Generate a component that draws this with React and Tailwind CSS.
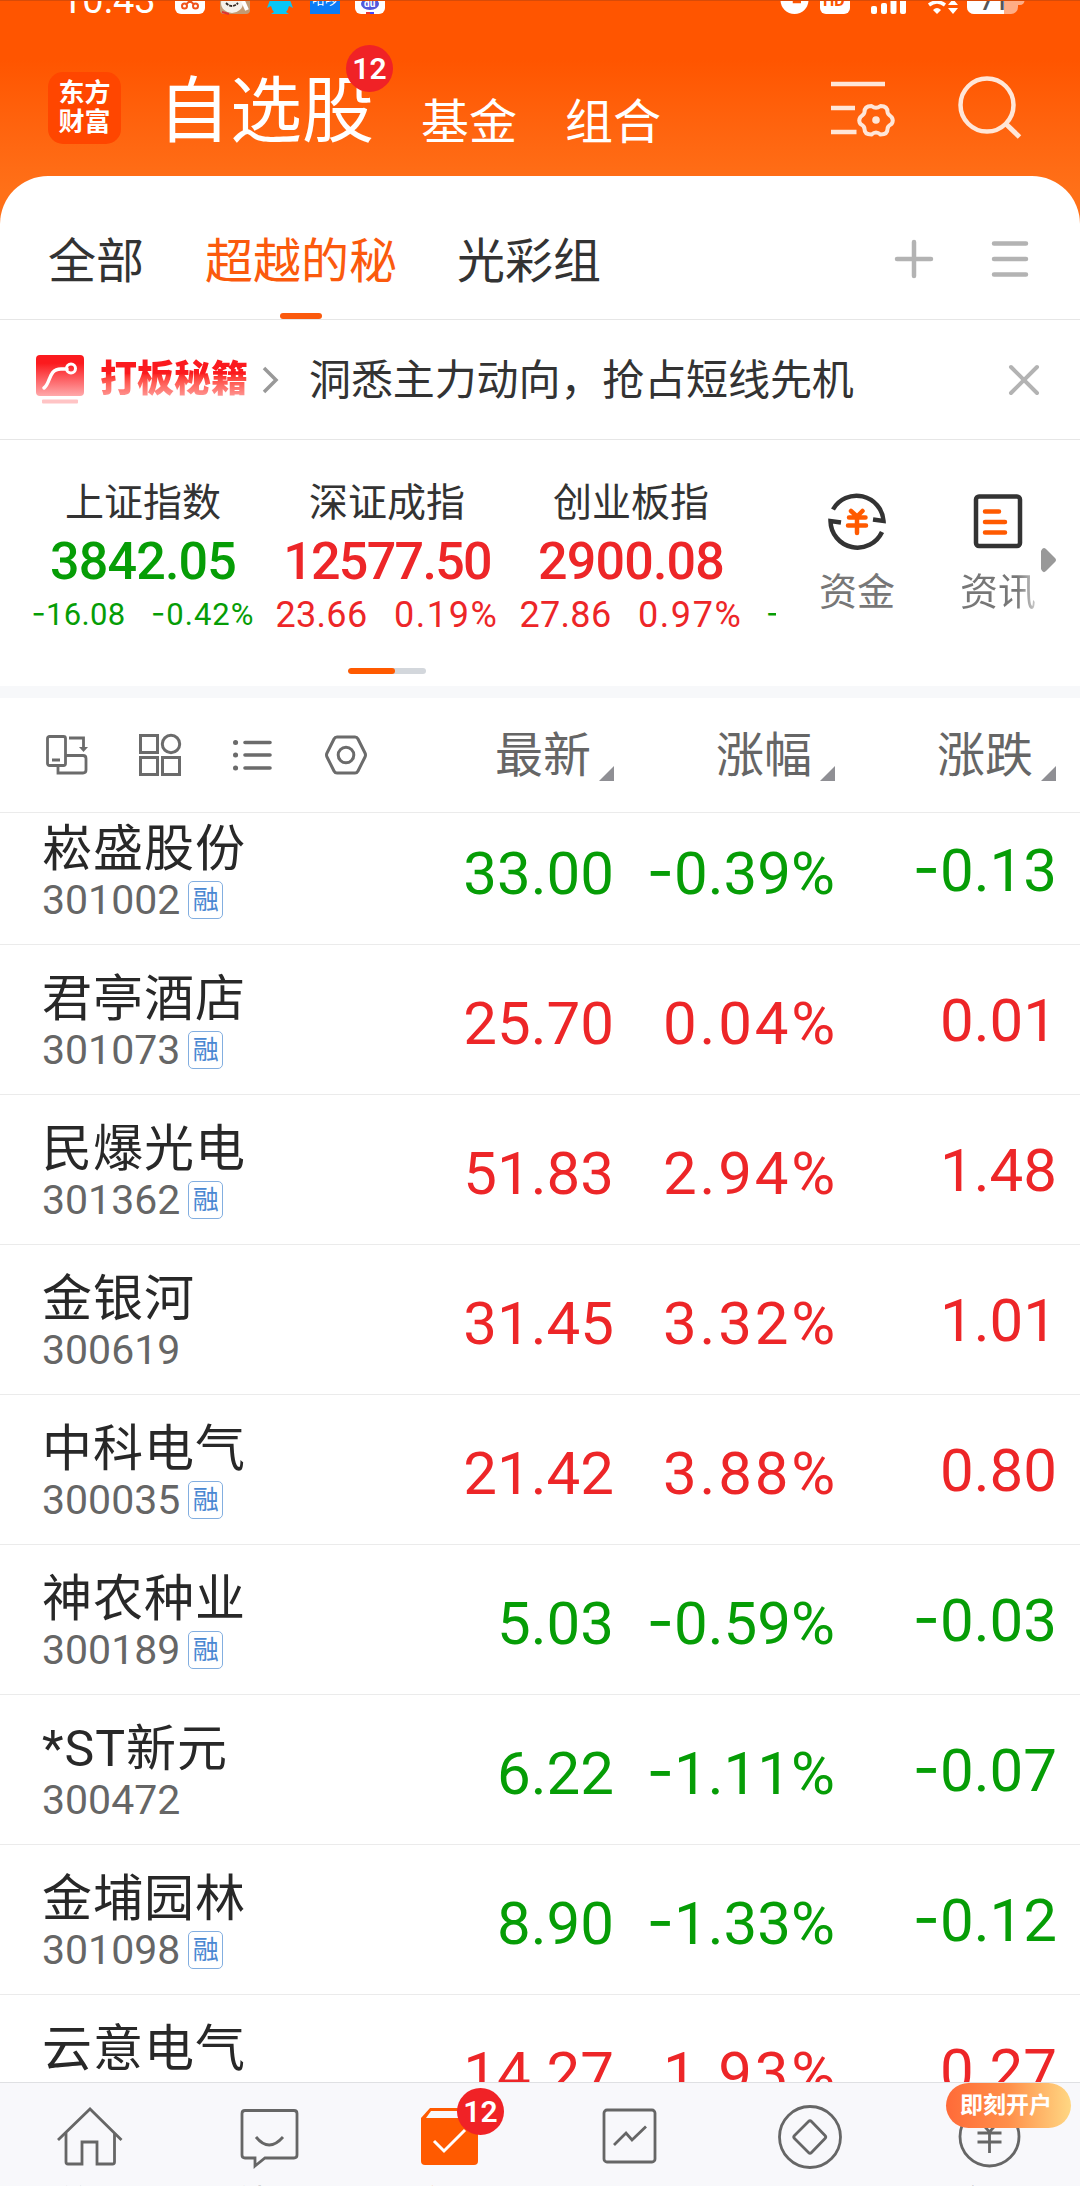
import React from "react";

const stocks = [
  { name: "崧盛股份", code: "301002", margin: true, price: "33.00", pct: "-0.39%", diff: "-0.13" },
  { name: "君亭酒店", code: "301073", margin: true, price: "25.70", pct: "0.04%", diff: "0.01" },
  { name: "民爆光电", code: "301362", margin: true, price: "51.83", pct: "2.94%", diff: "1.48" },
  { name: "金银河", code: "300619", margin: false, price: "31.45", pct: "3.32%", diff: "1.01" },
  { name: "中科电气", code: "300035", margin: true, price: "21.42", pct: "3.88%", diff: "0.80" },
  { name: "神农种业", code: "300189", margin: true, price: "5.03", pct: "-0.59%", diff: "-0.03" },
  { name: "*ST新元", code: "300472", margin: false, price: "6.22", pct: "-1.11%", diff: "-0.07" },
  { name: "金埔园林", code: "301098", margin: true, price: "8.90", pct: "-1.33%", diff: "-0.12" },
  { name: "云意电气", code: "", margin: false, price: "14.27", pct: "1.93%", diff: "0.27" },
];

const indexes = [
  { name: "上证指数", value: "3842.05", diff: "-16.08", pct: "-0.42%" },
  { name: "深证成指", value: "12577.50", diff: "23.66", pct: "0.19%" },
  { name: "创业板指", value: "2900.08", diff: "27.86", pct: "0.97%" },
];

// the minus sign is wider and sits higher than Roboto's hyphen
function Num({ children }) {
  if (!children.startsWith("-")) return children;
  return (
    <>
      <span className="font-['Inter'] leading-[0] align-[0.03em]">-</span>
      {children.slice(1)}
    </>
  );
}

function StatusBar() {
  return (
    <div className="flex h-[18px] border-t border-[#d84b08] overflow-hidden">
      <div className="ml-[61px] w-[114px] -mt-[19px] text-[38px] leading-[37px] text-white">10:43</div>
      <svg className="w-[212px] h-[14px]" viewBox="175 1 212 14">
        <rect x="175" y="-16" width="30" height="30" rx="6" fill="#fff" />
        <g stroke="#f0531c" strokeWidth="2" fill="none">
          <circle cx="184.500" cy="6" r="2.500" />
          <circle cx="195.500" cy="6" r="2.500" />
          <path d="M186.500 4 L195 -4 M193.500 4 L185 -4" />
        </g>
        <rect x="220" y="-16" width="30" height="30" rx="4" fill="#c39a72" />
        <ellipse cx="232" cy="3" rx="11" ry="10" fill="#f5f1ea" />
        <path d="M226 3 q6 6 12 0 M230 -1 h4" stroke="#332a24" strokeWidth="1.800" strokeDasharray="3 1" fill="none" />
        <path d="M243 1 l4 9" stroke="#fff" strokeWidth="4" />
        <path d="M222 12 l7 2" stroke="#d33" strokeWidth="2" />
        <path d="M270 0 h20 l3 8 -4 -2 q-1 4 -3 6 l3 2 h-18 l3 -2 q-2 -2 -3 -6 l-4 2z" fill="#08c6f7" />
        <rect x="310" y="-16" width="30" height="30" fill="#0a7cf5" />
        <text x="312" y="4" fontSize="13" fill="#fff">哈啰</text>
        <rect x="355" y="-16" width="30" height="30" rx="6" fill="#fff" />
        <ellipse cx="370" cy="4" rx="9" ry="6" fill="#5157dc" />
        <text x="364" y="7" fontSize="10" fontWeight="700" fill="#fff">du</text>
        <path d="M366 13 h4" stroke="#e33" strokeWidth="2" />
        <path d="M370 13 h4" stroke="#44f" strokeWidth="2" />
      </svg>
      <svg className="ml-[391px] w-[250px] h-[14px]" viewBox="777 1 250 14">
        <circle cx="793.500" cy="0" r="14" fill="#fff" />
        <path d="M793 -4 v6 h7" stroke="#ff5500" strokeWidth="2.500" fill="none" />
        <rect x="819" y="-16" width="30" height="30" rx="6" fill="#fff" />
        <text x="822" y="6" fontSize="16" fontWeight="700" fill="#ff5500">HD</text>
        <g fill="#fff">
          <rect x="870" y="6" width="6" height="8" rx="2" />
          <rect x="880" y="3" width="6" height="11" rx="2" />
          <rect x="889.500" y="-3" width="6" height="17" rx="2" />
          <rect x="899" y="-8" width="6" height="22" rx="2" />
          <path d="M932 10 q4 -4 8 0 l-4 4z" />
          <path d="M952 -1 l5 6 h-10z M947 8 h10 l-5 6z" />
        </g>
        <path d="M928 5 q8 -6 16 0" stroke="#fff" strokeWidth="3.500" fill="none" />
        <path d="M925 -1 q11 -7 22 0" stroke="#fff" strokeWidth="2" fill="none" />
        <rect x="966" y="-12" width="51" height="26" rx="7" fill="#ffad85" />
        <path d="M966 -5 h37 v19 h-30 a7 7 0 0 1 -7 -7z" fill="#fff" />
        <path d="M1016 -4 h3 a2 2 0 0 1 0 9 h-3z" fill="#ffad85" />
        <text x="979" y="10" fontSize="25" fontWeight="500" fill="#555">71</text>
      </svg>
    </div>
  );
}

function CountBadge({ className }) {
  return (
    <span className={`absolute flex items-center justify-center w-[47px] h-[47px] rounded-full bg-[#f02226] text-white text-[30px] leading-none font-semibold ${className}`}>
      12
    </span>
  );
}

function Header() {
  return (
    <header className="flex h-[158px]">
      <div className="ml-12 mt-[54px] flex flex-col items-center justify-center w-[73px] h-[72px] rounded-[15px] bg-[#ff4600] text-white text-[26px] leading-[29px] font-bold">
        <span>东方</span>
        <span>财富</span>
      </div>
      <div className="relative ml-[37px] mt-[58px] w-[221px] text-[72px] leading-[72px] text-white">
        自选股
        <CountBadge className="left-[188px] -top-[31px]" />
      </div>
      <div className="ml-[42px] mt-[81px] text-[48px] leading-[48px] text-white">基金</div>
      <div className="ml-[48px] mt-[81px] text-[48px] leading-[48px] text-white">组合</div>
      <svg className="ml-[168px] mt-[56px] w-[66px] h-[70px]" viewBox="829 74 66 70" fill="none" stroke="#ffe6d8" strokeWidth="4.500">
        <path d="M831 84 h54 M831 108 h24 M831 132 h25.500" />
        <path
          d="M871.500 106 q4.500 3.500 9 0 q7 0 7 6 q0 2 4 5 q2.500 3.500 0 7 q-4 2 -4 5 q0 5.500 -7 5.500 q-4.500 -4 -9 0 q-7 0 -7 -5.500 q0 -3 -4 -5 q-2.500 -3.500 0 -7 q4 -3 4 -5 q0 -6 7 -6z"
          strokeWidth="4"
          strokeLinejoin="round"
        />
        <circle cx="876" cy="120" r="3.800" fill="#ffe6d8" stroke="none" />
      </svg>
      <svg className="ml-[61px] mt-[56px] w-[70px] h-[70px]" viewBox="956 74 70 70" fill="none" stroke="#ffe6d8" strokeWidth="4.500">
        <circle cx="987" cy="105" r="26.500" />
        <path d="M1006 124 L1019.500 137" strokeWidth="5" />
      </svg>
    </header>
  );
}

function GroupTabs() {
  return (
    <div className="flex h-[144px] border-b border-[#e6e6e6] text-[48px] leading-[48px] text-[#333]">
      <div className="ml-12 mt-[62px]">全部</div>
      <div className="ml-[61px] mt-[62px] flex flex-col items-center text-[#fb5a0d]">
        超越的秘
        <span className="mt-[27px] w-[42px] h-[6px] rounded-full bg-[#fb5a0d]" />
      </div>
      <div className="ml-[60px] mt-[62px]">光彩组</div>
      <svg className="ml-[291px] mt-[61px] w-[44px] h-[44px]" viewBox="0 0 44 44" stroke="#b3b3b3" strokeWidth="4.500" strokeLinecap="round">
        <path d="M22 5 V39 M5 22 H39" />
      </svg>
      <svg className="ml-[52px] mt-[61px] w-[44px] h-[44px]" viewBox="0 0 44 44" stroke="#b3b3b3" strokeWidth="4.500" strokeLinecap="round">
        <path d="M6 6.500 H38 M6 22 H38 M6 37.500 H38" />
      </svg>
    </div>
  );
}

function PromoBanner() {
  return (
    <div className="flex items-center h-[120px] border-b border-[#e6e6e6]">
      <svg className="ml-9 w-12 h-[50px]" viewBox="0 0 48 50" fill="none">
        <defs>
          <linearGradient id="promo" x1="0" y1="0" x2="0" y2="1">
            <stop offset="0.200" stopColor="#fb1a1e" />
            <stop offset="1" stopColor="#ffa9ab" />
          </linearGradient>
        </defs>
        <rect width="48" height="41" rx="4" fill="url(#promo)" />
        <path d="M8 33 C15 28 12 14 25 14 H31" stroke="#fff" strokeWidth="3.500" strokeLinecap="round" />
        <circle cx="35" cy="13.500" r="4.500" stroke="#fff" strokeWidth="3" />
        <rect x="6" y="44.500" width="36" height="4" rx="1" fill="#ffc4c5" />
      </svg>
      <div className="ml-4 text-[37px] leading-[44px] font-black bg-gradient-to-b from-[#fb1a1e] from-35% to-[#ffa9ab] bg-clip-text text-transparent">打板秘籍</div>
      <svg className="ml-[13px] w-[20px] h-[32px]" viewBox="0 0 20 32" fill="none" stroke="#999" strokeWidth="3.500">
        <path d="M3 4 L15 16 L3 28" />
      </svg>
      <div className="ml-[28px] pt-[2px] text-[42px] leading-[42px] tracking-[-0.1px] text-[#333]">洞悉主力动向，抢占短线先机</div>
      <svg className="ml-auto mr-[40px] w-[32px] h-[32px]" viewBox="0 0 32 32" stroke="#b3b3b3" strokeWidth="4" strokeLinecap="round">
        <path d="M3 3 L29 29 M29 3 L3 29" />
      </svg>
    </div>
  );
}

function IndexCard({ item }) {
  const down = item.diff.startsWith("-");
  return (
    <div className={`w-[244px] flex flex-col items-center ${down ? "text-[#069d06]" : "text-[#ed2628]"}`}>
      <div className="mt-[44px] text-[39px] leading-[39px] text-[#333]">{item.name}</div>
      <div className={`mt-[13px] text-[52px] leading-[52px] font-medium ${item.value.length > 7 ? "tracking-[-1.7px]" : "tracking-[-0.8px]"}`}>{item.value}</div>
      <div className={`mt-[7px] flex w-[223px] h-[40px] items-baseline justify-between whitespace-nowrap leading-[40px] ${down ? "text-[31px]" : "text-[36px]"}`}>
        <span className="tracking-[0.3px]"><Num>{item.diff}</Num></span>
        <span className={down ? "tracking-[1px]" : "tracking-[1.6px]"}><Num>{item.pct}</Num></span>
      </div>
    </div>
  );
}

function IndexPanel() {
  return (
    <section className="h-[258px] border-b-[12px] border-[#f7f8fa]">
      <div className="flex h-[228px]">
        <div className="ml-[21px] flex w-[732px]">
          {indexes.map((item) => (
            <IndexCard key={item.name} item={item} />
          ))}
        </div>
        <div className="w-[23px] pl-[13px] pt-[153px] text-[31px] leading-[40px] text-[#069d06]">
          <div className="w-[10px] overflow-hidden font-['Inter']">-</div>
        </div>
        <div className="ml-[41px] flex w-[80px] flex-col items-center">
          <svg className="mt-[50px] w-[62px] h-[62px]" viewBox="825 490 62 62" fill="none" stroke="#333" strokeWidth="4.500">
            <path d="M832 509.500 A27 27 0 0 1 882.500 521 L872 519.500" />
            <path d="M881 532 A27 27 0 0 1 829.500 521 L840 522.500" />
            <path d="M850 511 L856 516.500 L861.500 511 M848 517.500 H864.500 M847 525.500 H865 M856 517 V533" stroke="#ff5a00" strokeLinecap="round" />
          </svg>
          <div className="mt-[21px] text-[38px] leading-[38px] text-[#777]">资金</div>
        </div>
        <div className="ml-[61px] flex w-[80px] flex-col items-center">
          <svg className="mt-[50px] w-[62px] h-[62px]" viewBox="0 0 62 62" fill="none" stroke="#333" strokeWidth="4.500">
            <rect x="9" y="6.500" width="44" height="49.500" rx="3" />
            <path d="M18 21.500 H32 M18 32 H38 M18 42.500 H38" stroke="#ff5a00" strokeLinecap="round" />
          </svg>
          <div className="mt-[20px] bg-gradient-to-r from-[#777] from-75% to-[#ccc] bg-clip-text text-[38px] leading-[40px] text-transparent">资讯</div>
        </div>
        <svg className="ml-[3px] mt-[107px] w-4 h-[26px] shrink-0" viewBox="0 0 16 26">
          <path d="M0 4 q2 -5 5 -2 l9 9 q2 2 0 4 l-9 9 q-3 3 -5 -2z" fill="#999" />
        </svg>
      </div>
      <div className="ml-[348px] flex w-[78px] h-[6px] rounded-full overflow-hidden bg-[#d3d7dc]">
        <div className="w-[47px] rounded-full bg-[#ff5a00]" />
      </div>
    </section>
  );
}

function SortHead({ label, className }) {
  return (
    <div className={`flex items-end justify-end ${className}`}>
      <span className="text-[48px] leading-[48px]">{label}</span>
      <svg className="ml-[8px] mb-[-1px] w-[15px] h-[15px]" viewBox="0 0 15 15">
        <path d="M15 0 V15 H0z" fill="#8f8f94" />
      </svg>
    </div>
  );
}

function TableHead() {
  return (
    <div className="flex items-center h-[115px] pr-6 border-b border-[#ebebeb] text-[#666]">
      <div className="ml-[45px] flex w-[336px] gap-[49px]">
        <svg className="w-[44px] h-[44px]" viewBox="0 0 44 44" fill="none" stroke="#6b6b6b" strokeWidth="2.800">
          <rect x="2.500" y="3.500" width="18" height="29" rx="2" />
          <path d="M7 27 H15 M24 5 H38.500 V16 M21 22.500 H38 q3 0 3 3 V37 q0 3 -3 3 H13 V33" />
          <path d="M34 14 H43 L38.500 19z" fill="#6b6b6b" stroke="none" />
        </svg>
        <svg className="w-[44px] h-[44px]" viewBox="0 0 44 44" fill="none" stroke="#6b6b6b" strokeWidth="3">
          <rect x="2.500" y="2.500" width="17" height="17" />
          <circle cx="33" cy="11" r="8.700" />
          <rect x="2.500" y="24.500" width="17" height="17" />
          <rect x="24.500" y="24.500" width="17" height="17" />
        </svg>
        <svg className="w-[44px] h-[44px]" viewBox="0 0 44 44" fill="none" stroke="#6b6b6b" strokeWidth="3.600" strokeLinecap="round">
          <path d="M14 9.500 H39 M14 22 H39 M14 35 H39" />
          <path d="M4.500 9.500 H4.600 M4.500 22 H4.600 M4.500 35 H4.600" strokeWidth="5" />
        </svg>
        <svg className="w-[44px] h-[44px]" viewBox="0 0 44 44" fill="none" stroke="#6b6b6b" strokeWidth="3" strokeLinejoin="round">
          <path d="M13 4 H31 q2 0 3 2 L41 20 q1 2 0 4 L34 38 q-1 2 -3 2 H13 q-2 0 -3 -2 L3 24 q-1 -2 0 -4 L10 6 q1 -2 3 -2z" />
          <circle cx="22" cy="22" r="7.800" />
        </svg>
      </div>
      <SortHead label="最新" className="w-[233px] pt-[2px]" />
      <SortHead label="涨幅" className="w-[221px] pt-[2px]" />
      <SortHead label="涨跌" className="w-[221px] pt-[2px]" />
    </div>
  );
}

function StockRow({ stock }) {
  const down = stock.diff.startsWith("-");
  return (
    <div className="flex h-[150px] shrink-0 pr-6 border-b border-[#ebebeb]">
      <div className="ml-[42px] w-[339px]">
        <div className="mt-[29px] text-[50px] leading-[50px] tracking-[1px] text-[#282828]">{stock.name}</div>
        <div className="mt-[7px] flex items-center h-[38px]">
          <span className="text-[41px] leading-[38px] text-[#666]">{stock.code}</span>
          {stock.margin && (
            <span className="ml-2 flex items-center justify-center w-[35px] h-[38px] rounded-[5px] border-[1.5px] border-[#82aee0] text-[26px] leading-none text-[#4a88d2]">融</span>
          )}
        </div>
      </div>
      <div className={`flex text-right text-[60px] leading-[60px] ${down ? "text-[#069d06]" : "text-[#ed2628]"}`}>
        <div className="mt-[49px] w-[233px]">{stock.price}</div>
        <div className={`mt-[49px] whitespace-nowrap ${down ? "w-[221px]" : "w-[224px] -mr-[3px] tracking-[2.8px]"}`}><Num>{stock.pct}</Num></div>
        <div className="mt-[46px] w-[222px] -mr-px"><Num>{stock.diff}</Num></div>
      </div>
    </div>
  );
}

function NavItem({ label, active, children }) {
  return (
    <div className={`relative flex w-[180px] flex-col items-center ${active ? "text-[#ff5a00]" : "text-[#666]"}`}>
      <svg className="mt-[18px] w-[70px] h-[70px] shrink-0" viewBox="0 0 70 70" fill="none" stroke="#666" strokeWidth="2.800">
        {children}
      </svg>
      <span className="mt-[15px] text-[33px] leading-[33px]">{label}</span>
      {active && <CountBadge className="left-[97px] top-[5px]" />}
    </div>
  );
}

function BottomNav() {
  return (
    <nav className="relative flex h-[104px] shrink-0 border-t border-[#dfe0e3] bg-[#f8f8fb]">
      <NavItem label="首页">
        <path d="M3 39 L35 8 L66.500 39" />
        <path d="M11 32 V61 q0 2 2 2 H27 V41 H42 V63 H57.500 q2 0 2 -2 V32" />
      </NavItem>
      <NavItem label="社区">
        <path d="M10 9.500 H59 q3 0 3 3 V54 q0 3 -3 3 H30 L20 65 V57 H10 q-3 0 -3 -3 V12.500 q0 -3 3 -3z" />
        <path d="M21 36 q13 16 27 0" />
      </NavItem>
      <NavItem label="自选" active>
        <path d="M6 17 L15 7 H58 L63 14 V60 q0 4 -4 4 H10 q-4 0 -4 -4z" fill="#ff5a00" stroke="none" />
        <path d="M11 17 L16 10 H57 V17z" fill="#f8f8fb" stroke="none" />
        <path d="M19 40 L29 50 L50 29" stroke="#fff" strokeWidth="3" />
      </NavItem>
      <NavItem label="行情">
        <rect x="9" y="9" width="51" height="52" rx="3" />
        <path d="M19 44 L31 32 L37 39 L51 25.500" />
      </NavItem>
      <NavItem label="理财">
        <circle cx="35" cy="36" r="30.500" />
        <path d="M33.500 20.500 q1.500 -1.500 3 0 L50 34.500 q1.500 1.500 0 3 L36.500 51.500 q-1.500 1.500 -3 0 L19.500 37.500 q-1.500 -1.500 0 -3z" />
      </NavItem>
      <NavItem label="交易">
        <circle cx="34.500" cy="35.500" r="29.500" />
        <path d="M26.500 22 L34.500 31 L42.500 22 M22.500 32 H46.500 M22.500 41 H46.500 M34.500 31 V52" />
      </NavItem>
      <span className="absolute left-[946px] top-0 flex items-center w-[125px] h-[45px] pl-[14px] rounded-full bg-gradient-to-r from-[#ff6a38] via-[#ff8f4a] to-[#ffd783] text-[23px] leading-none font-bold text-white">
        即刻开户
      </span>
    </nav>
  );
}

export default function App() {
  return (
    <div className="flex flex-col w-[1080px] h-[2186px] overflow-hidden bg-white font-['Roboto','Noto_Sans_CJK_SC',sans-serif]">
      <div className="shrink-0 bg-gradient-to-b from-[#ff5500] from-[60px] to-[#ff7018] to-[190px]">
        <StatusBar />
        <Header />
        <div className="rounded-t-[48px] bg-white">
          <GroupTabs />
        </div>
      </div>
      <PromoBanner />
      <IndexPanel />
      <TableHead />
      {/* list is scrolled, so the first row starts under the table head */}
      <div className="flex-1 min-h-0 overflow-hidden">
        <div className="-mt-[18px] flex flex-col">
          {stocks.map((stock) => (
            <StockRow key={stock.name} stock={stock} />
          ))}
        </div>
      </div>
      <BottomNav />
    </div>
  );
}
